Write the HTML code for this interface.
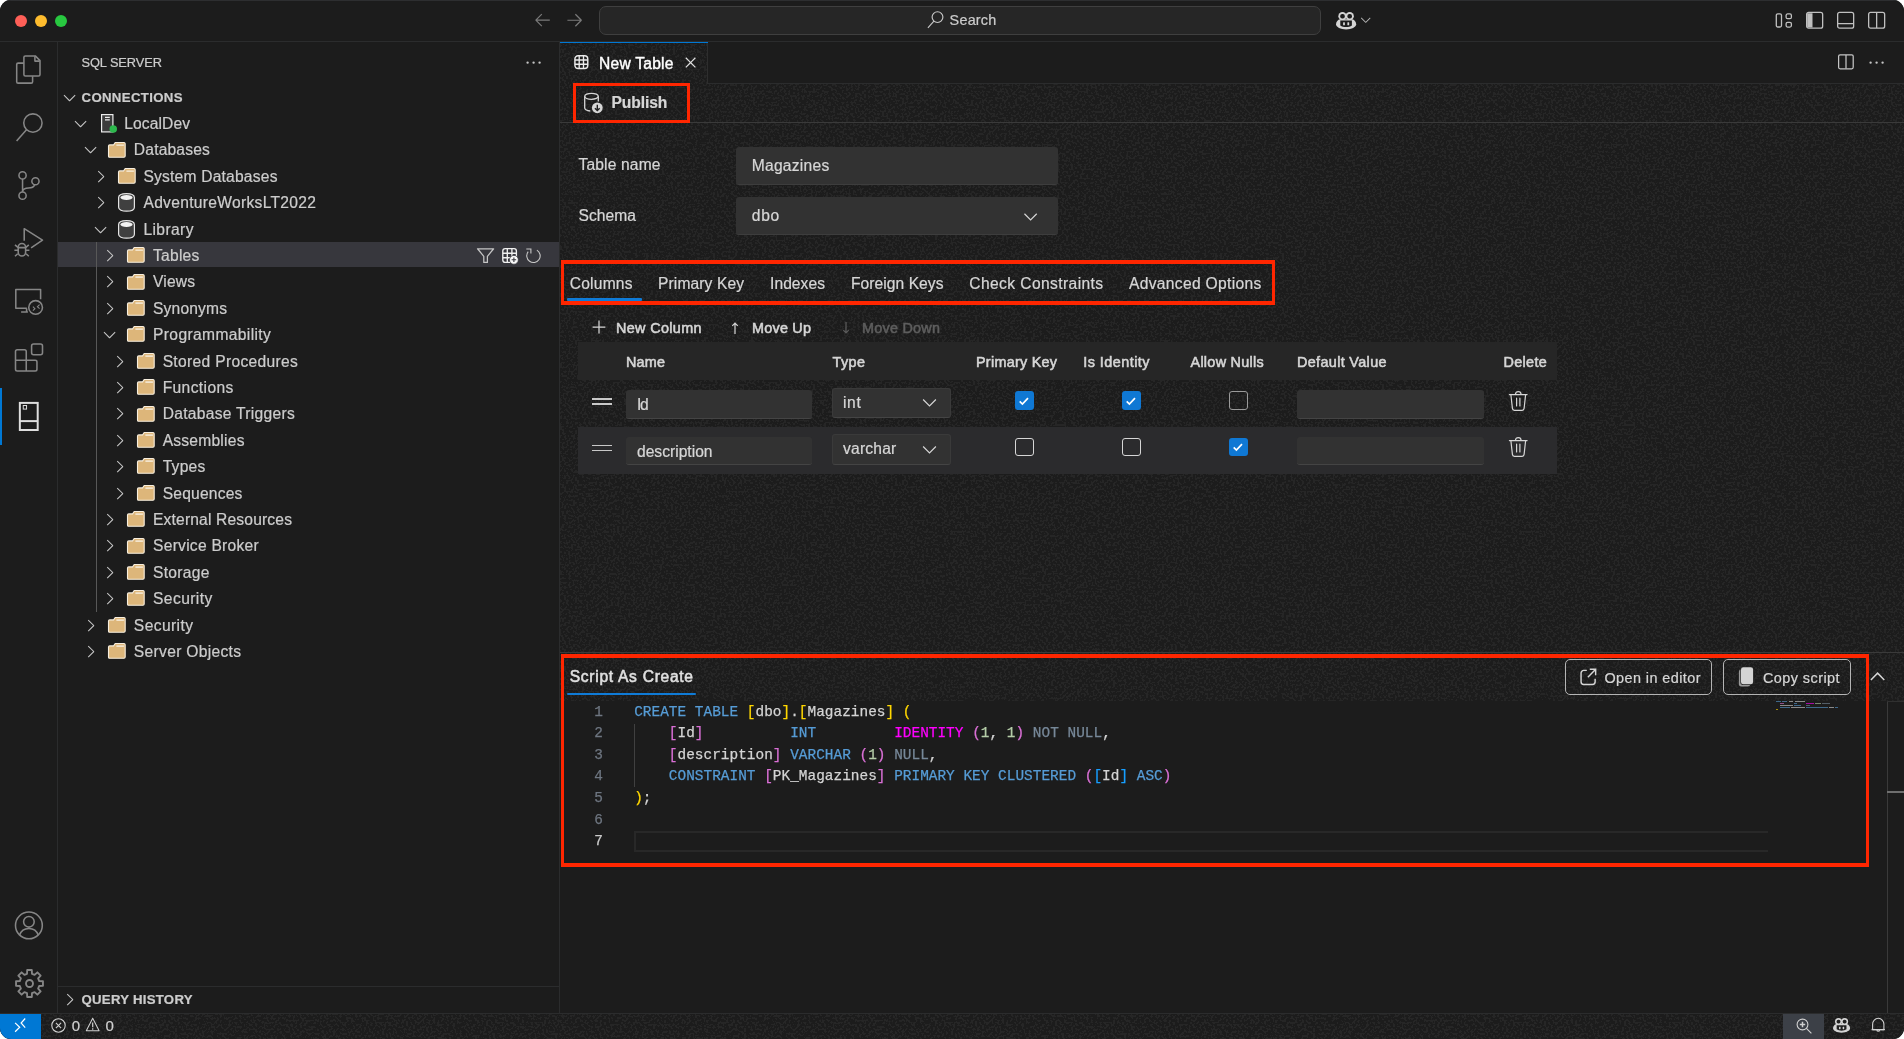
<!DOCTYPE html>
<html lang="en"><head><meta charset="utf-8"><title>New Table - SQL Server</title>
<style>
*{box-sizing:border-box}
html,body{margin:0;padding:0}
body{background:#fff;width:1904px;height:1039px;overflow:hidden;font-family:"Liberation Sans",sans-serif;color:#ccc}
#win{will-change:transform;position:absolute;left:0;top:0;width:1904px;height:1039px;border-radius:11px;background:#1c1c1c;overflow:hidden}
.a{position:absolute}
.t{position:absolute;white-space:pre;line-height:1;font-size:15.6px;color:#cccccc;-webkit-text-stroke:0.22px}
.m{position:absolute;white-space:pre;line-height:1;font-size:14.4px;font-family:"Liberation Mono",monospace;color:#d4d4d4;-webkit-text-stroke:0.25px}
svg{position:absolute;overflow:visible}
</style></head>
<body>
<div id="win">
<div class="a" style="left:0px;top:0px;width:1904px;height:41px;background:#1c1c1c;"></div>
<div class="a" style="left:0px;top:0px;width:1904px;height:1px;background:#2d2e30;"></div>
<div class="a" style="left:0px;top:41px;width:1904px;height:1px;background:#2b2c2d;"></div>
<div class="a" style="left:14.9px;top:14.799999999999999px;width:12.2px;height:12.2px;background:#fe5f57;border-radius:50%;"></div>
<div class="a" style="left:34.9px;top:14.799999999999999px;width:12.2px;height:12.2px;background:#febc2e;border-radius:50%;"></div>
<div class="a" style="left:54.9px;top:14.799999999999999px;width:12.2px;height:12.2px;background:#28c840;border-radius:50%;"></div>
<svg style="left:532.50px;top:10.40px" width="19.2" height="19.2" viewBox="0 0 16 16" ><path fill="#7a7a7a" d="M7 3.093l-5 5V8.8l5 5 .707-.707-4.146-4.147H14v-1H3.56L7.707 3.8 7 3.093z"/></svg>
<svg style="left:564.50px;top:10.40px" width="19.2" height="19.2" viewBox="0 0 16 16" ><path fill="#7a7a7a" d="M9 13.887l5-5V8.18l-5-5-.707.707 4.146 4.147H2v1h10.44L8.293 13.18l.707.707z"/></svg>
<div class="a" style="left:599px;top:5.7px;width:722px;height:29.3px;background:#262626;border:1px solid #3f3f3f;border-radius:7px;"></div>
<svg style="left:920.00px;top:5.00px" width="30" height="30" viewBox="0 0 30 30" ><circle cx="17.500" cy="12.100" r="5.400" fill="none" stroke="#c8c8c8" stroke-width="1.150"/><path d="M13.900 16.200L7.900 22.800" stroke="#c8c8c8" stroke-width="1.150" fill="none"/></svg>
<span class="t" style="left:949.60px;top:13.27px;font-size:14.4px;color:#cccccc;letter-spacing:0.218px;">Search</span>
<svg style="left:1336.00px;top:11.70px" width="20.2" height="17.4" viewBox="0 0 20.200 17.400" ><g fill="#d4d4d4"><circle cx="6.500" cy="4.150" r="4.150"/><circle cx="13.700" cy="4.150" r="4.150"/><path d="M0 12.200C0 9.500 2 7.600 4 7.200H16.200C18.200 7.600 20.200 9.500 20.200 12.200C20.200 15 15.500 17.400 10.100 17.400S0 15 0 12.200Z"/></g><g fill="#1c1c1c"><rect x="4.200" y="2" width="4.600" height="4.400" rx="2"/><rect x="11.400" y="2" width="4.600" height="4.400" rx="2"/><path d="M4.300 8.600H15.900V13.400C14.400 14.400 12.300 14.900 10.100 14.900S5.800 14.400 4.300 13.400Z"/></g><g fill="#d4d4d4"><rect x="7.100" y="10.200" width="1.800" height="3" rx=".5"/><rect x="11.400" y="10.200" width="1.800" height="3" rx=".5"/></g></svg>
<svg style="left:1357.90px;top:12.30px" width="15.5" height="15.5" viewBox="0 0 16 16" ><path fill="#b4b4b4" d="M7.976 10.072l4.357-4.357.62.618L8.284 11h-.618L3 6.333l.619-.618 4.357 4.357z"/></svg>
<svg style="left:1774.00px;top:10.20px" width="20" height="20" viewBox="0 0 20 20" ><rect x="2.300" y="3.800" width="5.200" height="13.200" rx="1.500" fill="none" stroke="#c0c0c0" stroke-width="1.3"/><rect x="12.100" y="3.900" width="5.300" height="4.800" rx="1.500" fill="none" stroke="#c0c0c0" stroke-width="1.3"/><rect x="12.100" y="12.300" width="5.300" height="4.800" rx="1.500" fill="none" stroke="#c0c0c0" stroke-width="1.3"/></svg>
<svg style="left:1804.00px;top:10.20px" width="20" height="20" viewBox="0 0 20 20" ><rect x="2.650" y="2.450" width="16" height="15.700" rx="2" fill="none" stroke="#c0c0c0" stroke-width="1.3"/><path d="M3.200 3.200h5.300v14.200H3.200z" fill="#c0c0c0"/></svg>
<svg style="left:1835.00px;top:10.20px" width="20" height="20" viewBox="0 0 20 20" ><rect x="2.650" y="2.450" width="16" height="15.700" rx="2" fill="none" stroke="#c0c0c0" stroke-width="1.3"/><path d="M3 13.600h15.400" fill="none" stroke="#c0c0c0" stroke-width="1.3"/></svg>
<svg style="left:1866.00px;top:10.20px" width="20" height="20" viewBox="0 0 20 20" ><rect x="2.650" y="2.450" width="16" height="15.700" rx="2" fill="none" stroke="#c0c0c0" stroke-width="1.3"/><path d="M10.650 2.600v15.400" fill="none" stroke="#c0c0c0" stroke-width="1.3"/></svg>
<div class="a" style="left:57px;top:42px;width:1px;height:971px;background:#2b2c2d;"></div>
<svg style="left:0.00px;top:0.00px" width="58" height="1039" viewBox="0 0 58 1039" ><path d="M25.4 55.9H35.3L40 60.6V74.600Q40 76 38.600 76H25.300Q23.900 76 23.900 74.600V57.300Q23.900 55.900 25.400 55.900Z" fill="none" stroke="#868686" stroke-width="1.55" stroke-linejoin="round"/><path d="M34.900 56.200V61.100H39.800" fill="none" stroke="#868686" stroke-width="1.55" stroke-linejoin="round"/><path d="M23.900 63.100H18.100Q16.700 63.100 16.700 64.500V81.700Q16.700 83.100 18.100 83.100H31.200Q32.600 83.100 32.600 81.700V76.200" fill="none" stroke="#868686" stroke-width="1.55" stroke-linejoin="round"/><circle cx="32.900" cy="123" r="9.150" fill="none" stroke="#868686" stroke-width="1.55" stroke-linejoin="round"/><path d="M26.700 129.600L16.600 140.900" fill="none" stroke="#868686" stroke-width="1.55" stroke-linejoin="round"/><circle cx="22.550" cy="175.450" r="3.600" fill="none" stroke="#868686" stroke-width="1.55" stroke-linejoin="round"/><circle cx="22.550" cy="195.650" r="3.600" fill="none" stroke="#868686" stroke-width="1.55" stroke-linejoin="round"/><circle cx="35.450" cy="181.250" r="3.600" fill="none" stroke="#868686" stroke-width="1.55" stroke-linejoin="round"/><path d="M22.550 179.100V192M34.600 184.900C33.600 187.700 31.500 187.900 28.500 187.900C25.500 187.900 23.200 188.800 22.600 191.300" fill="none" stroke="#868686" stroke-width="1.55" stroke-linejoin="round"/><path d="M24.200 240.800V228.700L42.500 240.100L31.100 247.800" fill="none" stroke="#868686" stroke-width="1.55" stroke-linejoin="round"/><rect x="18.200" y="243.500" width="7.400" height="12.500" rx="3.700" fill="none" stroke="#868686" stroke-width="1.55" stroke-linejoin="round"/><path d="M18.200 247.600H25.600M17.900 247.400L15 244.900M14.400 250.300H18M17.700 253.700L15 256.200M25.900 247.400L28.800 244.900M25.800 250.300H29.400M26.100 253.700L28.800 256.200" fill="none" stroke="#868686" stroke-width="1.55" stroke-linejoin="round"/><path d="M40.600 299.200V289.500H15.800V308.300H26.900" fill="none" stroke="#868686" stroke-width="1.55" stroke-linejoin="round"/><path d="M26.600 308.500V311.800M21.100 311.900H27.900" fill="none" stroke="#868686" stroke-width="1.55" stroke-linejoin="round"/><circle cx="35.600" cy="307.450" r="6.850" fill="none" stroke="#868686" stroke-width="1.55" stroke-linejoin="round"/><path d="M32.900 306.700L34.900 308.700L32.900 310.700M39.600 304.700L37.400 306.700L39.600 308.700" fill="none" stroke="#868686" stroke-width="1.1"/><path d="M17.300 349.700H24.500Q26.250 349.700 26.250 351.500V360.300H35.200Q36.950 360.300 36.950 362V369.300Q36.950 371.050 35.200 371.050H17.300Q15.500 371.050 15.500 369.300V351.500Q15.500 349.700 17.300 349.700ZM15.500 360.300H26.250M26.250 360.300V371.050" fill="none" stroke="#868686" stroke-width="1.55" stroke-linejoin="round"/><rect x="31.600" y="343.900" width="10.900" height="10.800" rx="2" fill="none" stroke="#868686" stroke-width="1.55" stroke-linejoin="round"/><circle cx="28.900" cy="925.400" r="13.400" fill="none" stroke="#868686" stroke-width="1.55" stroke-linejoin="round"/><circle cx="28.900" cy="921.800" r="5.300" fill="none" stroke="#868686" stroke-width="1.55" stroke-linejoin="round"/><path d="M19.600 935c1.500-4.600 5.100-6.600 9.300-6.600s7.800 2 9.300 6.600" fill="none" stroke="#868686" stroke-width="1.55" stroke-linejoin="round"/></svg>
<div class="a" style="left:0px;top:388px;width:2px;height:57px;background:#0078d4;"></div>
<svg style="left:0.00px;top:380.00px" width="58" height="70" viewBox="0 0 58 70" ><rect x="19.850" y="22.900" width="17.850" height="27.100" fill="none" stroke="#dedede" stroke-width="2"/><path d="M19.850 41.100h17.850" stroke="#dedede" stroke-width="2"/><rect x="23.250" y="25.500" width="3.300" height="3.600" fill="none" stroke="#dedede" stroke-width="1"/></svg>
<svg style="left:14.50px;top:969.00px" width="29" height="29" viewBox="0 0 24 24" ><path d="M10.09 0.86L13.91 0.86L14.05 3.96L16.23 4.86L18.52 2.77L21.23 5.48L19.14 7.77L20.04 9.95L23.14 10.09L23.14 13.91L20.04 14.05L19.14 16.23L21.23 18.52L18.52 21.23L16.23 19.14L14.05 20.04L13.91 23.14L10.09 23.14L9.95 20.04L7.77 19.14L5.48 21.23L2.77 18.52L4.86 16.23L3.96 14.05L0.86 13.91L0.86 10.09L3.96 9.95L4.86 7.77L2.77 5.48L5.48 2.77L7.77 4.86L9.95 3.96z" fill="none" stroke="#868686" stroke-width="1.55" stroke-linejoin="round"/><circle cx="12" cy="12" r="2.900" fill="none" stroke="#868686" stroke-width="1.55" stroke-linejoin="round"/></svg>
<div class="a" style="left:559px;top:42px;width:1px;height:971px;background:#2b2c2d;"></div>
<span class="t" style="left:81.50px;top:57.15px;font-size:12.8px;color:#cccccc;letter-spacing:-0.077px;">SQL SERVER</span>
<svg style="left:523.50px;top:53.00px" width="19.2" height="19.2" viewBox="0 0 16 16" ><path fill="#c5c5c5" d="M4 8a1 1 0 1 1-2 0 1 1 0 0 1 2 0zm5 0a1 1 0 1 1-2 0 1 1 0 0 1 2 0zm5 0a1 1 0 1 1-2 0 1 1 0 0 1 2 0z"/></svg>
<svg style="left:60.20px;top:88.00px" width="19.2" height="19.2" viewBox="0 0 16 16" ><path fill="#c5c5c5" d="M7.976 10.072l4.357-4.357.62.618L8.284 11h-.618L3 6.333l.619-.618 4.357 4.357z"/></svg>
<span class="t" style="left:81.50px;top:90.85px;font-size:13.2px;color:#cccccc;font-weight:700;letter-spacing:0.355px;">CONNECTIONS</span>
<div class="a" style="left:58px;top:241.9px;width:501px;height:25.6px;background:#37373d;"></div>
<div class="a" style="left:96px;top:242.4px;width:1px;height:369.59999999999997px;background:#585858;"></div>
<svg style="left:71.10px;top:114.00px" width="19.2" height="19.2" viewBox="0 0 16 16" ><path fill="#c5c5c5" d="M7.976 10.072l4.357-4.357.62.618L8.284 11h-.618L3 6.333l.619-.618 4.357 4.357z"/></svg>
<svg style="left:101.25px;top:114.30px" width="16" height="19" viewBox="0 0 16 19" ><rect x=".6" y=".6" width="11.300" height="17.300" fill="#3c3c3c" stroke="#ececec" stroke-width="1.200"/><path d="M4 3.400h4.800M4 5.900h4.800" stroke="#ececec" stroke-width="1.100"/><circle cx="12.250" cy="15.100" r="3.750" fill="#2db84d"/></svg>
<span class="t" style="left:124.25px;top:115.98px;letter-spacing:0.105px;">LocalDev</span>
<svg style="left:80.70px;top:140.40px" width="19.2" height="19.2" viewBox="0 0 16 16" ><path fill="#c5c5c5" d="M7.976 10.072l4.357-4.357.62.618L8.284 11h-.618L3 6.333l.619-.618 4.357 4.357z"/></svg>
<svg style="left:108.00px;top:141.60px" width="17.7" height="15.8" viewBox="0 0 17.700 15.800" ><path d="M1.700 2.900H5.600L7.200 .5H16Q17.200 .5 17.200 1.700V14.100Q17.200 15.300 16 15.300H1.700Q.5 15.300 .5 14.100V4.100Q.5 2.900 1.700 2.900Z" fill="#ddb67a" stroke="#f8efdf" stroke-width="1.100"/><path d="M8.400 3.100H15.900" stroke="#f8f0e2" stroke-width="1.400"/></svg>
<span class="t" style="left:133.85px;top:142.38px;letter-spacing:0.18px;">Databases</span>
<svg style="left:91.20px;top:166.80px" width="19.2" height="19.2" viewBox="0 0 16 16" ><path fill="#c5c5c5" d="M10.072 8.024L5.715 3.667l.618-.62L11 7.716v.618L6.333 13l-.618-.619 4.357-4.357z"/></svg>
<svg style="left:117.60px;top:168.00px" width="17.7" height="15.8" viewBox="0 0 17.700 15.800" ><path d="M1.700 2.900H5.600L7.200 .5H16Q17.200 .5 17.200 1.700V14.100Q17.200 15.300 16 15.300H1.700Q.5 15.300 .5 14.100V4.100Q.5 2.900 1.700 2.900Z" fill="#ddb67a" stroke="#f8efdf" stroke-width="1.100"/><path d="M8.400 3.100H15.900" stroke="#f8f0e2" stroke-width="1.400"/></svg>
<span class="t" style="left:143.45px;top:168.78px;letter-spacing:0.208px;">System Databases</span>
<svg style="left:91.20px;top:193.20px" width="19.2" height="19.2" viewBox="0 0 16 16" ><path fill="#c5c5c5" d="M10.072 8.024L5.715 3.667l.618-.62L11 7.716v.618L6.333 13l-.618-.619 4.357-4.357z"/></svg>
<svg style="left:118.10px;top:193.10px" width="17" height="18.8" viewBox="0 0 17 18.800" ><path d="M.6 4.600C.6 2 4 .6 8.500 .6S16.400 2 16.400 4.600V14.200C16.400 16.800 13 18.200 8.500 18.200S.6 16.800 .6 14.200Z" fill="#404040" stroke="#e4e4e4" stroke-width="1.200"/><ellipse cx="8.500" cy="4.500" rx="6" ry="2.600" fill="#f2f2f2"/></svg>
<span class="t" style="left:143.45px;top:195.18px;letter-spacing:0.304px;">AdventureWorksLT2022</span>
<svg style="left:90.50px;top:219.60px" width="19.2" height="19.2" viewBox="0 0 16 16" ><path fill="#c5c5c5" d="M7.976 10.072l4.357-4.357.62.618L8.284 11h-.618L3 6.333l.619-.618 4.357 4.357z"/></svg>
<svg style="left:118.10px;top:219.50px" width="17" height="18.8" viewBox="0 0 17 18.800" ><path d="M.6 4.600C.6 2 4 .6 8.500 .6S16.400 2 16.400 4.600V14.200C16.400 16.800 13 18.200 8.500 18.200S.6 16.800 .6 14.200Z" fill="#404040" stroke="#e4e4e4" stroke-width="1.200"/><ellipse cx="8.500" cy="4.500" rx="6" ry="2.600" fill="#f2f2f2"/></svg>
<span class="t" style="left:143.45px;top:221.58px;letter-spacing:0.388px;">Library</span>
<svg style="left:99.90px;top:246.00px" width="19.2" height="19.2" viewBox="0 0 16 16" ><path fill="#c5c5c5" d="M10.072 8.024L5.715 3.667l.618-.62L11 7.716v.618L6.333 13l-.618-.619 4.357-4.357z"/></svg>
<svg style="left:127.20px;top:247.20px" width="17.7" height="15.8" viewBox="0 0 17.700 15.800" ><path d="M1.700 2.900H5.600L7.200 .5H16Q17.200 .5 17.200 1.700V14.100Q17.200 15.300 16 15.300H1.700Q.5 15.300 .5 14.100V4.100Q.5 2.900 1.700 2.900Z" fill="#ddb67a" stroke="#f8efdf" stroke-width="1.100"/><path d="M8.400 3.100H15.900" stroke="#f8f0e2" stroke-width="1.400"/></svg>
<span class="t" style="left:153.05px;top:247.98px;letter-spacing:0.234px;">Tables</span>
<svg style="left:99.90px;top:272.40px" width="19.2" height="19.2" viewBox="0 0 16 16" ><path fill="#c5c5c5" d="M10.072 8.024L5.715 3.667l.618-.62L11 7.716v.618L6.333 13l-.618-.619 4.357-4.357z"/></svg>
<svg style="left:127.20px;top:273.60px" width="17.7" height="15.8" viewBox="0 0 17.700 15.800" ><path d="M1.700 2.900H5.600L7.200 .5H16Q17.200 .5 17.200 1.700V14.100Q17.200 15.300 16 15.300H1.700Q.5 15.300 .5 14.100V4.100Q.5 2.900 1.700 2.900Z" fill="#ddb67a" stroke="#f8efdf" stroke-width="1.100"/><path d="M8.400 3.100H15.900" stroke="#f8f0e2" stroke-width="1.400"/></svg>
<span class="t" style="left:153.05px;top:274.38px;letter-spacing:0.168px;">Views</span>
<svg style="left:99.90px;top:298.80px" width="19.2" height="19.2" viewBox="0 0 16 16" ><path fill="#c5c5c5" d="M10.072 8.024L5.715 3.667l.618-.62L11 7.716v.618L6.333 13l-.618-.619 4.357-4.357z"/></svg>
<svg style="left:127.20px;top:300.00px" width="17.7" height="15.8" viewBox="0 0 17.700 15.800" ><path d="M1.700 2.900H5.600L7.200 .5H16Q17.200 .5 17.200 1.700V14.100Q17.200 15.300 16 15.300H1.700Q.5 15.300 .5 14.100V4.100Q.5 2.900 1.700 2.900Z" fill="#ddb67a" stroke="#f8efdf" stroke-width="1.100"/><path d="M8.400 3.100H15.900" stroke="#f8f0e2" stroke-width="1.400"/></svg>
<span class="t" style="left:153.05px;top:300.78px;letter-spacing:0.17px;">Synonyms</span>
<svg style="left:99.90px;top:325.20px" width="19.2" height="19.2" viewBox="0 0 16 16" ><path fill="#c5c5c5" d="M7.976 10.072l4.357-4.357.62.618L8.284 11h-.618L3 6.333l.619-.618 4.357 4.357z"/></svg>
<svg style="left:127.20px;top:326.40px" width="17.7" height="15.8" viewBox="0 0 17.700 15.800" ><path d="M1.700 2.900H5.600L7.200 .5H16Q17.200 .5 17.200 1.700V14.100Q17.200 15.300 16 15.300H1.700Q.5 15.300 .5 14.100V4.100Q.5 2.900 1.700 2.900Z" fill="#ddb67a" stroke="#f8efdf" stroke-width="1.100"/><path d="M8.400 3.100H15.900" stroke="#f8f0e2" stroke-width="1.400"/></svg>
<span class="t" style="left:153.05px;top:327.18px;letter-spacing:0.367px;">Programmability</span>
<svg style="left:109.50px;top:351.60px" width="19.2" height="19.2" viewBox="0 0 16 16" ><path fill="#c5c5c5" d="M10.072 8.024L5.715 3.667l.618-.62L11 7.716v.618L6.333 13l-.618-.619 4.357-4.357z"/></svg>
<svg style="left:136.80px;top:352.80px" width="17.7" height="15.8" viewBox="0 0 17.700 15.800" ><path d="M1.700 2.900H5.600L7.200 .5H16Q17.200 .5 17.200 1.700V14.100Q17.200 15.300 16 15.300H1.700Q.5 15.300 .5 14.100V4.100Q.5 2.900 1.700 2.900Z" fill="#ddb67a" stroke="#f8efdf" stroke-width="1.100"/><path d="M8.400 3.100H15.900" stroke="#f8f0e2" stroke-width="1.400"/></svg>
<span class="t" style="left:162.65px;top:353.58px;letter-spacing:0.323px;">Stored Procedures</span>
<svg style="left:109.50px;top:378.00px" width="19.2" height="19.2" viewBox="0 0 16 16" ><path fill="#c5c5c5" d="M10.072 8.024L5.715 3.667l.618-.62L11 7.716v.618L6.333 13l-.618-.619 4.357-4.357z"/></svg>
<svg style="left:136.80px;top:379.20px" width="17.7" height="15.8" viewBox="0 0 17.700 15.800" ><path d="M1.700 2.900H5.600L7.200 .5H16Q17.200 .5 17.200 1.700V14.100Q17.200 15.300 16 15.300H1.700Q.5 15.300 .5 14.100V4.100Q.5 2.900 1.700 2.900Z" fill="#ddb67a" stroke="#f8efdf" stroke-width="1.100"/><path d="M8.400 3.100H15.900" stroke="#f8f0e2" stroke-width="1.400"/></svg>
<span class="t" style="left:162.65px;top:379.98px;letter-spacing:0.386px;">Functions</span>
<svg style="left:109.50px;top:404.40px" width="19.2" height="19.2" viewBox="0 0 16 16" ><path fill="#c5c5c5" d="M10.072 8.024L5.715 3.667l.618-.62L11 7.716v.618L6.333 13l-.618-.619 4.357-4.357z"/></svg>
<svg style="left:136.80px;top:405.60px" width="17.7" height="15.8" viewBox="0 0 17.700 15.800" ><path d="M1.700 2.900H5.600L7.200 .5H16Q17.200 .5 17.200 1.700V14.100Q17.200 15.300 16 15.300H1.700Q.5 15.300 .5 14.100V4.100Q.5 2.900 1.700 2.900Z" fill="#ddb67a" stroke="#f8efdf" stroke-width="1.100"/><path d="M8.400 3.100H15.900" stroke="#f8f0e2" stroke-width="1.400"/></svg>
<span class="t" style="left:162.65px;top:406.38px;letter-spacing:0.292px;">Database Triggers</span>
<svg style="left:109.50px;top:430.80px" width="19.2" height="19.2" viewBox="0 0 16 16" ><path fill="#c5c5c5" d="M10.072 8.024L5.715 3.667l.618-.62L11 7.716v.618L6.333 13l-.618-.619 4.357-4.357z"/></svg>
<svg style="left:136.80px;top:432.00px" width="17.7" height="15.8" viewBox="0 0 17.700 15.800" ><path d="M1.700 2.900H5.600L7.200 .5H16Q17.200 .5 17.200 1.700V14.100Q17.200 15.300 16 15.300H1.700Q.5 15.300 .5 14.100V4.100Q.5 2.900 1.700 2.900Z" fill="#ddb67a" stroke="#f8efdf" stroke-width="1.100"/><path d="M8.400 3.100H15.900" stroke="#f8f0e2" stroke-width="1.400"/></svg>
<span class="t" style="left:162.65px;top:432.78px;letter-spacing:0.23px;">Assemblies</span>
<svg style="left:109.50px;top:457.20px" width="19.2" height="19.2" viewBox="0 0 16 16" ><path fill="#c5c5c5" d="M10.072 8.024L5.715 3.667l.618-.62L11 7.716v.618L6.333 13l-.618-.619 4.357-4.357z"/></svg>
<svg style="left:136.80px;top:458.40px" width="17.7" height="15.8" viewBox="0 0 17.700 15.800" ><path d="M1.700 2.900H5.600L7.200 .5H16Q17.200 .5 17.200 1.700V14.100Q17.200 15.300 16 15.300H1.700Q.5 15.300 .5 14.100V4.100Q.5 2.900 1.700 2.900Z" fill="#ddb67a" stroke="#f8efdf" stroke-width="1.100"/><path d="M8.400 3.100H15.900" stroke="#f8f0e2" stroke-width="1.400"/></svg>
<span class="t" style="left:162.65px;top:459.18px;letter-spacing:0.273px;">Types</span>
<svg style="left:109.50px;top:483.60px" width="19.2" height="19.2" viewBox="0 0 16 16" ><path fill="#c5c5c5" d="M10.072 8.024L5.715 3.667l.618-.62L11 7.716v.618L6.333 13l-.618-.619 4.357-4.357z"/></svg>
<svg style="left:136.80px;top:484.80px" width="17.7" height="15.8" viewBox="0 0 17.700 15.800" ><path d="M1.700 2.900H5.600L7.200 .5H16Q17.200 .5 17.200 1.700V14.100Q17.200 15.300 16 15.300H1.700Q.5 15.300 .5 14.100V4.100Q.5 2.900 1.700 2.900Z" fill="#ddb67a" stroke="#f8efdf" stroke-width="1.100"/><path d="M8.400 3.100H15.900" stroke="#f8f0e2" stroke-width="1.400"/></svg>
<span class="t" style="left:162.65px;top:485.58px;letter-spacing:0.209px;">Sequences</span>
<svg style="left:99.90px;top:510.00px" width="19.2" height="19.2" viewBox="0 0 16 16" ><path fill="#c5c5c5" d="M10.072 8.024L5.715 3.667l.618-.62L11 7.716v.618L6.333 13l-.618-.619 4.357-4.357z"/></svg>
<svg style="left:127.20px;top:511.20px" width="17.7" height="15.8" viewBox="0 0 17.700 15.800" ><path d="M1.700 2.900H5.600L7.200 .5H16Q17.200 .5 17.200 1.700V14.100Q17.200 15.300 16 15.300H1.700Q.5 15.300 .5 14.100V4.100Q.5 2.900 1.700 2.900Z" fill="#ddb67a" stroke="#f8efdf" stroke-width="1.100"/><path d="M8.400 3.100H15.900" stroke="#f8f0e2" stroke-width="1.400"/></svg>
<span class="t" style="left:153.05px;top:511.98px;letter-spacing:0.166px;">External Resources</span>
<svg style="left:99.90px;top:536.40px" width="19.2" height="19.2" viewBox="0 0 16 16" ><path fill="#c5c5c5" d="M10.072 8.024L5.715 3.667l.618-.62L11 7.716v.618L6.333 13l-.618-.619 4.357-4.357z"/></svg>
<svg style="left:127.20px;top:537.60px" width="17.7" height="15.8" viewBox="0 0 17.700 15.800" ><path d="M1.700 2.900H5.600L7.200 .5H16Q17.200 .5 17.200 1.700V14.100Q17.200 15.300 16 15.300H1.700Q.5 15.300 .5 14.100V4.100Q.5 2.900 1.700 2.900Z" fill="#ddb67a" stroke="#f8efdf" stroke-width="1.100"/><path d="M8.400 3.100H15.900" stroke="#f8f0e2" stroke-width="1.400"/></svg>
<span class="t" style="left:153.05px;top:538.38px;letter-spacing:0.256px;">Service Broker</span>
<svg style="left:99.90px;top:562.80px" width="19.2" height="19.2" viewBox="0 0 16 16" ><path fill="#c5c5c5" d="M10.072 8.024L5.715 3.667l.618-.62L11 7.716v.618L6.333 13l-.618-.619 4.357-4.357z"/></svg>
<svg style="left:127.20px;top:564.00px" width="17.7" height="15.8" viewBox="0 0 17.700 15.800" ><path d="M1.700 2.900H5.600L7.200 .5H16Q17.200 .5 17.200 1.700V14.100Q17.200 15.300 16 15.300H1.700Q.5 15.300 .5 14.100V4.100Q.5 2.900 1.700 2.900Z" fill="#ddb67a" stroke="#f8efdf" stroke-width="1.100"/><path d="M8.400 3.100H15.900" stroke="#f8f0e2" stroke-width="1.400"/></svg>
<span class="t" style="left:153.05px;top:564.78px;letter-spacing:0.296px;">Storage</span>
<svg style="left:99.90px;top:589.20px" width="19.2" height="19.2" viewBox="0 0 16 16" ><path fill="#c5c5c5" d="M10.072 8.024L5.715 3.667l.618-.62L11 7.716v.618L6.333 13l-.618-.619 4.357-4.357z"/></svg>
<svg style="left:127.20px;top:590.40px" width="17.7" height="15.8" viewBox="0 0 17.700 15.800" ><path d="M1.700 2.900H5.600L7.200 .5H16Q17.200 .5 17.200 1.700V14.100Q17.200 15.300 16 15.300H1.700Q.5 15.300 .5 14.100V4.100Q.5 2.900 1.700 2.900Z" fill="#ddb67a" stroke="#f8efdf" stroke-width="1.100"/><path d="M8.400 3.100H15.900" stroke="#f8f0e2" stroke-width="1.400"/></svg>
<span class="t" style="left:153.05px;top:591.18px;letter-spacing:0.408px;">Security</span>
<svg style="left:80.70px;top:615.60px" width="19.2" height="19.2" viewBox="0 0 16 16" ><path fill="#c5c5c5" d="M10.072 8.024L5.715 3.667l.618-.62L11 7.716v.618L6.333 13l-.618-.619 4.357-4.357z"/></svg>
<svg style="left:108.00px;top:616.80px" width="17.7" height="15.8" viewBox="0 0 17.700 15.800" ><path d="M1.700 2.900H5.600L7.200 .5H16Q17.200 .5 17.200 1.700V14.100Q17.200 15.300 16 15.300H1.700Q.5 15.300 .5 14.100V4.100Q.5 2.900 1.700 2.900Z" fill="#ddb67a" stroke="#f8efdf" stroke-width="1.100"/><path d="M8.400 3.100H15.900" stroke="#f8f0e2" stroke-width="1.400"/></svg>
<span class="t" style="left:133.85px;top:617.58px;letter-spacing:0.408px;">Security</span>
<svg style="left:80.70px;top:642.00px" width="19.2" height="19.2" viewBox="0 0 16 16" ><path fill="#c5c5c5" d="M10.072 8.024L5.715 3.667l.618-.62L11 7.716v.618L6.333 13l-.618-.619 4.357-4.357z"/></svg>
<svg style="left:108.00px;top:643.20px" width="17.7" height="15.8" viewBox="0 0 17.700 15.800" ><path d="M1.700 2.900H5.600L7.200 .5H16Q17.200 .5 17.200 1.700V14.100Q17.200 15.300 16 15.300H1.700Q.5 15.300 .5 14.100V4.100Q.5 2.900 1.700 2.900Z" fill="#ddb67a" stroke="#f8efdf" stroke-width="1.100"/><path d="M8.400 3.100H15.900" stroke="#f8f0e2" stroke-width="1.400"/></svg>
<span class="t" style="left:133.85px;top:643.98px;letter-spacing:0.312px;">Server Objects</span>
<svg style="left:475.50px;top:246.00px" width="19.2" height="19.2" viewBox="0 0 16 16" ><path d="M1.300 2.300h13.400L9.500 8.600v5.100l-3 .0V8.600z" fill="none" stroke="#c5c5c5" stroke-width="1.050" stroke-linejoin="round"/></svg>
<svg style="left:465.00px;top:240.00px" width="90" height="30" viewBox="0 0 90 30" ><rect x="37.800" y="8.600" width="13.600" height="13.700" rx="2.400" fill="none" stroke="#f0f0f0" stroke-width="1.350"/><path d="M37.800 13.200h13.600M37.800 17.700h13.600M42.300 8.600v13.700M46.900 8.600v13.700" stroke="#f0f0f0" stroke-width="1.350"/><circle cx="48.900" cy="19.800" r="4.400" fill="#fafafa" stroke="#37373d" stroke-width=".7"/><path d="M48.900 17.500v4.600M46.600 19.800h4.600" stroke="#37373d" stroke-width="1.100"/><path d="M71.900 10.100A6.700 6.700 0 1 1 63.200 11.700" fill="none" stroke="#c8c8c8" stroke-width="1.100"/><path d="M61.300 9H65.900V13.400" fill="none" stroke="#c8c8c8" stroke-width="1.100"/></svg>
<div class="a" style="left:58px;top:986px;width:501px;height:1px;background:#2b2c2d;"></div>
<svg style="left:59.90px;top:990.30px" width="19.2" height="19.2" viewBox="0 0 16 16" ><path fill="#c5c5c5" d="M10.072 8.024L5.715 3.667l.618-.62L11 7.716v.618L6.333 13l-.618-.619 4.357-4.357z"/></svg>
<span class="t" style="left:81.50px;top:993.45px;font-size:13.2px;color:#cccccc;font-weight:700;letter-spacing:0.272px;">QUERY HISTORY</span>
<div class="a" style="left:560px;top:42px;width:1344px;height:42px;background:#1c1c1c;"></div>
<div class="a" style="left:560px;top:83px;width:1344px;height:1px;background:#2b2c2d;"></div>
<div class="a" style="left:560px;top:42px;width:148px;height:42px;background:#1c1c1c;border-right:1px solid #2e2e2e;"></div>
<svg style="left:0;top:0" width="1904" height="1039" viewBox="0 0 1904 1039"><rect x="560" y="43" width="147" height="41" filter="url(#n)"/></svg>
<div class="a" style="left:560px;top:42px;width:148px;height:1.3px;background:#0078d4;"></div>
<svg style="left:574.20px;top:55.30px" width="14.7" height="14.3" viewBox="0 0 16 16" ><rect x=".8" y=".8" width="14.400" height="14.400" rx="3.600" fill="none" stroke="#ececec" stroke-width="1.600"/><path d="M.8 5.600h14.400M.8 10.400h14.400M5.600.8v14.400M10.400.8v14.400" stroke="#ececec" stroke-width="1.500"/></svg>
<span class="t" style="left:599.00px;top:55.68px;color:#ffffff;letter-spacing:0.246px;-webkit-text-stroke:0.4px;">New Table</span>
<svg style="left:681.40px;top:53.10px" width="19.2" height="19.2" viewBox="0 0 16 16" ><path fill="#e0e0e0" d="M8 8.707l3.646 3.647.708-.707L8.707 8l3.647-3.646-.707-.708L8 7.293 4.354 3.646l-.707.708L7.293 8l-3.646 3.646.707.708L8 8.707z"/></svg>
<svg style="left:1837.00px;top:53.00px" width="18" height="18" viewBox="0 0 18 18" ><rect x="1.600" y="1.800" width="14.600" height="14" rx="1.500" fill="none" stroke="#c5c5c5" stroke-width="1.250"/><path d="M9 2v13.600" stroke="#c5c5c5" stroke-width="1.250"/></svg>
<svg style="left:1867.40px;top:53.00px" width="19.2" height="19.2" viewBox="0 0 16 16" ><path fill="#c5c5c5" d="M4 8a1 1 0 1 1-2 0 1 1 0 0 1 2 0zm5 0a1 1 0 1 1-2 0 1 1 0 0 1 2 0zm5 0a1 1 0 1 1-2 0 1 1 0 0 1 2 0z"/></svg>
<div class="a" style="left:560px;top:84px;width:1344px;height:569px;background:#1c1c1c;"></div>
<svg style="left:0;top:0" width="1904" height="1039" viewBox="0 0 1904 1039"><filter id="n" x="0" y="0" width="100%" height="100%" color-interpolation-filters="sRGB"><feTurbulence type="fractalNoise" baseFrequency="0.45" numOctaves="1" seed="7"/><feColorMatrix type="matrix" values="0 0 0 0 0.149  0 0 0 0 0.149  0 0 0 0 0.149  40 0 0 0 -21.2"/></filter><rect x="560" y="84" width="1344" height="616.500" filter="url(#n)"/></svg>
<div class="a" style="left:560px;top:122px;width:1344px;height:1px;background:#3a3a3a;"></div>
<svg style="left:583.10px;top:91.80px" width="21" height="22" viewBox="0 0 21 22" ><path d="M1.700 4.300v11.500c0 1.700 2.400 2.900 5.600 3.200" fill="none" stroke="#d6d6d6" stroke-width="1.300"/><path d="M15.300 4.300v5.200" fill="none" stroke="#d6d6d6" stroke-width="1.300"/><ellipse cx="8.500" cy="4.300" rx="6.800" ry="3" fill="none" stroke="#d6d6d6" stroke-width="1.300"/><circle cx="14.300" cy="15.800" r="5.400" fill="#d6d6d6"/><path d="M14.300 12.800v5.700M11.900 16.200l2.400 2.400 2.400-2.400" fill="none" stroke="#202020" stroke-width="1.400"/></svg>
<span class="t" style="left:611.50px;top:94.68px;color:#d6d6d6;font-weight:700;letter-spacing:-0.096px;">Publish</span>
<div class="a" style="left:573.1px;top:82.6px;width:116.6px;height:40.2px;border:3.700px solid #ff2600;"></div>
<span class="t" style="left:578.50px;top:156.88px;color:#d6d6d6;letter-spacing:0.153px;">Table name</span>
<div class="a" style="left:736px;top:147.2px;width:322px;height:38px;background:#323232;border-radius:3px;border-bottom:1px solid #3d3d3d;"></div>
<span class="t" style="left:751.75px;top:157.98px;color:#d6d6d6;letter-spacing:0.26px;">Magazines</span>
<span class="t" style="left:578.50px;top:208.38px;color:#d6d6d6;letter-spacing:0.056px;">Schema</span>
<div class="a" style="left:736px;top:197.2px;width:322px;height:38px;background:#323232;border-radius:3px;border-bottom:1px solid #3d3d3d;"></div>
<span class="t" style="left:751.75px;top:207.68px;color:#d6d6d6;letter-spacing:0.734px;">dbo</span>
<svg style="left:1021.00px;top:207.30px" width="19.2" height="19.2" viewBox="0 0 20 20" ><path d="M3.600 7l6.400 6.400L16.400 7" fill="none" stroke="#d6d6d6" stroke-width="1.250"/></svg>
<span class="t" style="left:569.75px;top:275.78px;color:#d6d6d6;letter-spacing:0.203px;">Columns</span>
<span class="t" style="left:658.00px;top:275.78px;color:#d6d6d6;letter-spacing:0.108px;">Primary Key</span>
<span class="t" style="left:770.00px;top:275.78px;color:#d6d6d6;letter-spacing:0.062px;">Indexes</span>
<span class="t" style="left:851.00px;top:275.78px;color:#d6d6d6;letter-spacing:0.057px;">Foreign Keys</span>
<span class="t" style="left:969.25px;top:275.78px;color:#d6d6d6;letter-spacing:0.406px;">Check Constraints</span>
<span class="t" style="left:1128.90px;top:275.78px;color:#d6d6d6;letter-spacing:0.338px;">Advanced Options</span>
<div class="a" style="left:567.3px;top:298.4px;width:74.4px;height:2.6px;background:#0f7bd7;border-radius:1px;"></div>
<div class="a" style="left:560.7px;top:260.1px;width:714.2px;height:45px;border-style:solid;border-color:#ff2600;border-width:4.100px 3.900px;"></div>
<svg style="left:592.20px;top:320.30px" width="14" height="14" viewBox="0 0 14 14" ><path d="M7 .6v12.800M.6 7h12.800" stroke="#d6d6d6" stroke-width="1.250"/></svg>
<span class="t" style="left:616.00px;top:320.77px;font-size:14.4px;color:#d6d6d6;-webkit-text-stroke:0.55px;letter-spacing:0.347px;">New Column</span>
<svg style="left:729.00px;top:320.50px" width="12" height="14" viewBox="0 0 12 14" ><path d="M6 2v11M3.300 4.800L6 2l2.700 2.800" fill="none" stroke="#d6d6d6" stroke-width="1.200"/></svg>
<span class="t" style="left:752.00px;top:320.77px;font-size:14.4px;color:#d6d6d6;-webkit-text-stroke:0.55px;letter-spacing:0.234px;">Move Up</span>
<svg style="left:839.50px;top:320.50px" width="12" height="14" viewBox="0 0 12 14" ><path d="M6 1v11M3.300 9.200L6 12l2.700-2.800" fill="none" stroke="#5c5c5c" stroke-width="1.200"/></svg>
<span class="t" style="left:862.00px;top:320.77px;font-size:14.4px;color:#5e5e5e;-webkit-text-stroke:0.55px;letter-spacing:0.252px;">Move Down</span>
<div class="a" style="left:578px;top:342px;width:979px;height:37.6px;background:#262626;"></div>
<div class="a" style="left:578px;top:427px;width:979px;height:46.5px;background:#2b2b2d;"></div>
<span class="t" style="left:626.00px;top:354.77px;font-size:14.4px;color:#d6d6d6;-webkit-text-stroke:0.55px;letter-spacing:0.203px;">Name</span>
<span class="t" style="left:832.50px;top:354.77px;font-size:14.4px;color:#d6d6d6;-webkit-text-stroke:0.55px;letter-spacing:0.432px;">Type</span>
<span class="t" style="left:976.00px;top:354.77px;font-size:14.4px;color:#d6d6d6;-webkit-text-stroke:0.55px;letter-spacing:0.263px;">Primary Key</span>
<span class="t" style="left:1083.25px;top:354.77px;font-size:14.4px;color:#d6d6d6;-webkit-text-stroke:0.55px;letter-spacing:0.466px;">Is Identity</span>
<span class="t" style="left:1190.50px;top:354.77px;font-size:14.4px;color:#d6d6d6;-webkit-text-stroke:0.55px;letter-spacing:0.287px;">Allow Nulls</span>
<span class="t" style="left:1297.00px;top:354.77px;font-size:14.4px;color:#d6d6d6;-webkit-text-stroke:0.55px;letter-spacing:0.346px;">Default Value</span>
<span class="t" style="left:1503.50px;top:354.77px;font-size:14.4px;color:#d6d6d6;-webkit-text-stroke:0.55px;letter-spacing:0.328px;">Delete</span>
<div class="a" style="left:592px;top:398px;width:20px;height:1.6px;background:#c8c8c8;"></div>
<div class="a" style="left:592px;top:403px;width:20px;height:1.6px;background:#c8c8c8;"></div>
<div class="a" style="left:626.2px;top:390px;width:186.3px;height:28.5px;background:#323232;border-radius:3px;border-bottom:1px solid #444;"></div>
<span class="t" style="left:637.00px;top:397.28px;color:#d6d6d6;letter-spacing:-1.266px;">Id</span>
<div class="a" style="left:832px;top:387.7px;width:119.3px;height:30.8px;background:#323232;border-radius:3px;border:1px solid #3a3a3a;border-bottom-color:#444;"></div>
<span class="t" style="left:843.00px;top:394.68px;color:#d6d6d6;letter-spacing:0.633px;">int</span>
<svg style="left:921.00px;top:394.30px" width="17" height="17" viewBox="0 0 20 20" ><path d="M2.500 6.500l7.500 7.500 7.500-7.500" fill="none" stroke="#d6d6d6" stroke-width="1.400"/></svg>
<div class="a" style="left:1014.7px;top:391.2px;width:19px;height:18.6px;background:#0f78d4;border-radius:3px;"></div>
<svg style="left:1016.20px;top:392.50px" width="16" height="16" viewBox="0 0 16 16" ><path d="M3.700 8.300l2.700 2.700 5.600-5.800" fill="none" stroke="#fff" stroke-width="1.700"/></svg>
<div class="a" style="left:1121.8px;top:391.2px;width:19px;height:18.6px;background:#0f78d4;border-radius:3px;"></div>
<svg style="left:1123.30px;top:392.50px" width="16" height="16" viewBox="0 0 16 16" ><path d="M3.700 8.300l2.700 2.700 5.600-5.800" fill="none" stroke="#fff" stroke-width="1.700"/></svg>
<div class="a" style="left:1228.7px;top:391.2px;width:19px;height:18.6px;border:1.200px solid #9a9a9a;border-radius:3px;"></div>
<div class="a" style="left:1297px;top:390px;width:186.8px;height:28.5px;background:#323232;border-radius:3px;border-bottom:1px solid #444;"></div>
<svg style="left:1508.90px;top:390.90px" width="18.5" height="20" viewBox="0 0 18.500 20" ><path d="M.4 3.600H18.100M6.400 3.400C6.400 -.4 12.100 -.4 12.100 3.400M1.900 3.800L3.400 17.400C3.500 18.600 4.300 19.300 5.400 19.300H13.100C14.200 19.300 15 18.600 15.100 17.400L16.600 3.800M7.600 7.200V15M10.900 7.200V15" fill="none" stroke="#d6d6d6" stroke-width="1.200" stroke-linecap="round"/></svg>
<div class="a" style="left:592px;top:444.5px;width:20px;height:1.6px;background:#c8c8c8;"></div>
<div class="a" style="left:592px;top:449.5px;width:20px;height:1.6px;background:#c8c8c8;"></div>
<div class="a" style="left:626.2px;top:436.5px;width:186.3px;height:28.5px;background:#323232;border-radius:3px;border-bottom:1px solid #444;"></div>
<span class="t" style="left:637.00px;top:443.78px;color:#d6d6d6;letter-spacing:0.008px;">description</span>
<div class="a" style="left:832px;top:434.2px;width:119.3px;height:30.8px;background:#323232;border-radius:3px;border:1px solid #3a3a3a;border-bottom-color:#444;"></div>
<span class="t" style="left:843.00px;top:441.18px;color:#d6d6d6;letter-spacing:0.208px;">varchar</span>
<svg style="left:921.00px;top:440.80px" width="17" height="17" viewBox="0 0 20 20" ><path d="M2.500 6.500l7.500 7.500 7.500-7.500" fill="none" stroke="#d6d6d6" stroke-width="1.400"/></svg>
<div class="a" style="left:1014.7px;top:437.7px;width:19px;height:18.6px;border:1.200px solid #d6d6d6;border-radius:3px;"></div>
<div class="a" style="left:1121.8px;top:437.7px;width:19px;height:18.6px;border:1.200px solid #d6d6d6;border-radius:3px;"></div>
<div class="a" style="left:1228.7px;top:437.7px;width:19px;height:18.6px;background:#0f78d4;border-radius:3px;"></div>
<svg style="left:1230.20px;top:439.00px" width="16" height="16" viewBox="0 0 16 16" ><path d="M3.700 8.300l2.700 2.700 5.600-5.800" fill="none" stroke="#fff" stroke-width="1.700"/></svg>
<div class="a" style="left:1297px;top:436.5px;width:186.8px;height:28.5px;background:#323232;border-radius:3px;border-bottom:1px solid #444;"></div>
<svg style="left:1508.90px;top:437.40px" width="18.5" height="20" viewBox="0 0 18.500 20" ><path d="M.4 3.600H18.100M6.400 3.400C6.400 -.4 12.100 -.4 12.100 3.400M1.900 3.800L3.400 17.400C3.500 18.600 4.300 19.300 5.400 19.300H13.100C14.200 19.300 15 18.600 15.100 17.400L16.600 3.800M7.600 7.200V15M10.900 7.200V15" fill="none" stroke="#d6d6d6" stroke-width="1.200" stroke-linecap="round"/></svg>
<div class="a" style="left:560px;top:652px;width:1344px;height:1px;background:#3a3a3a;"></div>
<div class="a" style="left:560px;top:700.5px;width:1344px;height:313px;background:#1c1c1c;"></div>
<span class="t" style="left:569.75px;top:668.98px;color:#e0e0e0;-webkit-text-stroke:0.55px;letter-spacing:0.705px;">Script As Create</span>
<div class="a" style="left:567.3px;top:692.8px;width:128.3px;height:2.5px;background:#0f7bd7;border-radius:1px;"></div>
<div class="a" style="left:1565px;top:659px;width:146.5px;height:36px;border:1px solid #b4b4b4;border-radius:5px;"></div>

<span class="t" style="left:1604.50px;top:670.87px;font-size:14.4px;color:#d6d6d6;letter-spacing:0.43px;">Open in editor</span>
<svg style="left:1578.50px;top:668.00px" width="18.5" height="18.5" viewBox="0 0 18 18" ><path d="M7.600 2.300H4.600a2.600 2.600 0 0 0-2.600 2.600v8.500a2.600 2.600 0 0 0 2.600 2.600h8.500a2.600 2.600 0 0 0 2.600-2.600v-3" fill="none" stroke="#d6d6d6" stroke-width="1.400"/><path d="M10.500 1.300h5.700v5.700M16 1.500L8.600 8.900" fill="none" stroke="#d6d6d6" stroke-width="1.400"/></svg>
<div class="a" style="left:1722.5px;top:659px;width:128.3px;height:36px;border:1px solid #b4b4b4;border-radius:5px;"></div>

<span class="t" style="left:1763.00px;top:670.87px;font-size:14.4px;color:#d6d6d6;letter-spacing:0.452px;">Copy script</span>
<svg style="left:1738.00px;top:666.00px" width="17" height="22" viewBox="0 0 17 22" ><rect x=".9" y="3.300" width="11.300" height="17.300" rx="2.400" fill="#9a9a9a"/><rect x="2.400" y=".8" width="13.300" height="18.100" rx="2.600" fill="#202020"/><rect x="3" y="1.300" width="12.100" height="17" rx="2.300" fill="#d4d4d4"/></svg>
<svg style="left:1868.40px;top:667.00px" width="19.2" height="19.2" viewBox="0 0 20 20" ><path d="M3 13.600L10 6.400l7 7.200" fill="none" stroke="#d6d6d6" stroke-width="1.500"/></svg>
<span class="m" style="left:555px;top:704.57px;width:48px;text-align:right;color:#6e7681">1</span>
<span class="m" style="left:634.2px;top:704.57px;letter-spacing:0.028px"><span style="color:#569cd6">CREATE TABLE </span><span style="color:#ffd700">[</span><span style="color:#d4d4d4">dbo</span><span style="color:#ffd700">]</span><span style="color:#d4d4d4">.</span><span style="color:#ffd700">[</span><span style="color:#d4d4d4">Magazines</span><span style="color:#ffd700">]</span><span style="color:#d4d4d4"> </span><span style="color:#ffd700">(</span></span>
<span class="m" style="left:555px;top:726.17px;width:48px;text-align:right;color:#6e7681">2</span>
<span class="m" style="left:634.2px;top:726.17px;letter-spacing:0.028px"><span style="color:#d4d4d4">    </span><span style="color:#da70d6">[</span><span style="color:#d4d4d4">Id</span><span style="color:#da70d6">]</span><span style="color:#d4d4d4">          </span><span style="color:#569cd6">INT</span><span style="color:#d4d4d4">         </span><span style="color:#ff00ff">IDENTITY</span><span style="color:#d4d4d4"> </span><span style="color:#da70d6">(</span><span style="color:#b5cea8">1</span><span style="color:#d4d4d4">, </span><span style="color:#b5cea8">1</span><span style="color:#da70d6">)</span><span style="color:#d4d4d4"> </span><span style="color:#778899">NOT NULL</span><span style="color:#d4d4d4">,</span></span>
<span class="m" style="left:555px;top:747.77px;width:48px;text-align:right;color:#6e7681">3</span>
<span class="m" style="left:634.2px;top:747.77px;letter-spacing:0.028px"><span style="color:#d4d4d4">    </span><span style="color:#da70d6">[</span><span style="color:#d4d4d4">description</span><span style="color:#da70d6">]</span><span style="color:#d4d4d4"> </span><span style="color:#569cd6">VARCHAR</span><span style="color:#d4d4d4"> </span><span style="color:#da70d6">(</span><span style="color:#b5cea8">1</span><span style="color:#da70d6">)</span><span style="color:#d4d4d4"> </span><span style="color:#778899">NULL</span><span style="color:#d4d4d4">,</span></span>
<span class="m" style="left:555px;top:769.37px;width:48px;text-align:right;color:#6e7681">4</span>
<span class="m" style="left:634.2px;top:769.37px;letter-spacing:0.028px"><span style="color:#d4d4d4">    </span><span style="color:#569cd6">CONSTRAINT </span><span style="color:#da70d6">[</span><span style="color:#d4d4d4">PK_Magazines</span><span style="color:#da70d6">]</span><span style="color:#d4d4d4"> </span><span style="color:#569cd6">PRIMARY KEY CLUSTERED </span><span style="color:#da70d6">(</span><span style="color:#179fff">[</span><span style="color:#d4d4d4">Id</span><span style="color:#179fff">]</span><span style="color:#d4d4d4"> </span><span style="color:#569cd6">ASC</span><span style="color:#da70d6">)</span></span>
<span class="m" style="left:555px;top:790.97px;width:48px;text-align:right;color:#6e7681">5</span>
<span class="m" style="left:634.2px;top:790.97px;letter-spacing:0.028px"><span style="color:#ffd700">)</span><span style="color:#d4d4d4">;</span></span>
<span class="m" style="left:555px;top:812.57px;width:48px;text-align:right;color:#6e7681">6</span>
<span class="m" style="left:555px;top:834.17px;width:48px;text-align:right;color:#cccccc">7</span>
<div class="a" style="left:634.3px;top:724px;width:1px;height:63.4px;background:#404040;"></div>
<div class="a" style="left:634px;top:830.8px;width:1134px;height:20.8px;border:2px solid #282828;border-right:none;"></div>
<svg style="left:1775.50px;top:701.00px" width="64" height="12" viewBox="0 0 64 12" ><rect x="0.0" y="0.0" width="5.0" height="1" fill="#569cd6" opacity=".6"/><rect x="6.0" y="0.0" width="5.0" height="1" fill="#569cd6" opacity=".6"/><rect x="13.0" y="0.0" width="4.0" height="1" fill="#d4d4d4" opacity=".6"/><rect x="19.0" y="0.0" width="10.0" height="1" fill="#d4d4d4" opacity=".6"/><rect x="4.0" y="2.0" width="4.0" height="1" fill="#da70d6" opacity=".6"/><rect x="18.0" y="2.0" width="3.0" height="1" fill="#569cd6" opacity=".6"/><rect x="30.0" y="2.0" width="8.0" height="1" fill="#ff00ff" opacity=".6"/><rect x="39.0" y="2.0" width="6.0" height="1" fill="#b5cea8" opacity=".6"/><rect x="46.0" y="2.0" width="8.0" height="1" fill="#778899" opacity=".6"/><rect x="4.0" y="4.0" width="13.0" height="1" fill="#d4d4d4" opacity=".6"/><rect x="18.0" y="4.0" width="7.0" height="1" fill="#569cd6" opacity=".6"/><rect x="30.0" y="4.0" width="4.0" height="1" fill="#778899" opacity=".6"/><rect x="4.0" y="6.0" width="10.0" height="1" fill="#569cd6" opacity=".6"/><rect x="15.0" y="6.0" width="14.0" height="1" fill="#d4d4d4" opacity=".6"/><rect x="30.0" y="6.0" width="22.0" height="1" fill="#569cd6" opacity=".6"/><rect x="53.0" y="6.0" width="5.0" height="1" fill="#d4d4d4" opacity=".6"/><rect x="59.0" y="6.0" width="3.0" height="1" fill="#569cd6" opacity=".6"/><rect x="0.0" y="8.0" width="2.0" height="1" fill="#ffd700" opacity=".6"/></svg>
<div class="a" style="left:1887px;top:701px;width:1px;height:313px;background:#3a3a3a;"></div>
<div class="a" style="left:1887px;top:701px;width:17px;height:1px;background:#303030;"></div>
<div class="a" style="left:1887px;top:791px;width:17px;height:2px;background:#6e6e6e;"></div>
<div class="a" style="left:560.7px;top:654.2px;width:1308.1px;height:213.0px;border-style:solid;border-color:#ff2600;border-width:4px 3.900px 4.300px 3.800px;"></div>
<div class="a" style="left:0px;top:1013px;width:1904px;height:26px;background:#1c1c1c;"></div>
<svg style="left:0;top:0" width="1904" height="1039" viewBox="0 0 1904 1039"><rect x="41" y="1014" width="1863" height="25" filter="url(#n)"/></svg>
<div class="a" style="left:0px;top:1013px;width:1904px;height:1px;background:#2b2c2d;"></div>
<div class="a" style="left:0px;top:1013.5px;width:41px;height:25.5px;background:#0078d4;"></div>
<svg style="left:0.00px;top:1009.00px" width="42" height="30" viewBox="0 0 42 30" ><path d="M15.100 13.900L19.700 18.300L15.100 22.700M25.200 9.500L21.100 14L25.200 18.600" fill="none" stroke="#fff" stroke-width="1.200"/></svg>
<svg style="left:51.40px;top:1018.00px" width="15" height="15" viewBox="0 0 15 15" ><circle cx="7.500" cy="7.500" r="6.700" fill="none" stroke="#d0d0d0" stroke-width="1.100"/><path d="M4.900 4.900l5.200 5.200M10.100 4.900l-5.200 5.200" stroke="#d0d0d0" stroke-width="1.100"/></svg>
<span class="t" style="left:71.80px;top:1018.27px;font-size:15px;color:#d0d0d0;">0</span>
<svg style="left:85.30px;top:1017.20px" width="15.4" height="14.8" viewBox="0 0 15.400 14.800" ><path d="M7.700 1.300L14.100 13.700H1.300z" fill="none" stroke="#d0d0d0" stroke-width="1.050" stroke-linejoin="round"/><path d="M7.700 5.600v4.600M7.700 11.300v1.400" stroke="#d0d0d0" stroke-width="1.200"/></svg>
<span class="t" style="left:105.60px;top:1018.27px;font-size:15px;color:#d0d0d0;">0</span>
<div class="a" style="left:1783px;top:1014px;width:41px;height:25px;background:#3c4047;"></div>
<svg style="left:1795.50px;top:1017.50px" width="16" height="16" viewBox="0 0 16 16" ><circle cx="6.500" cy="6.500" r="5.400" fill="none" stroke="#d0d0d0" stroke-width="1.100"/><path d="M10.400 10.400l5 5" stroke="#d0d0d0" stroke-width="1.200"/><path d="M6.500 3.800v5.400M3.800 6.500h5.400" stroke="#d0d0d0" stroke-width="1.500"/></svg>
<svg style="left:1833.25px;top:1018.00px" width="17.15" height="14.75" viewBox="0 0 20.200 17.400" ><g fill="#d4d4d4"><circle cx="6.500" cy="4.150" r="4.150"/><circle cx="13.700" cy="4.150" r="4.150"/><path d="M0 12.200C0 9.500 2 7.600 4 7.200H16.200C18.200 7.600 20.200 9.500 20.200 12.200C20.200 15 15.500 17.400 10.100 17.400S0 15 0 12.200Z"/></g><g fill="#202020"><rect x="4.200" y="2" width="4.600" height="4.400" rx="2"/><rect x="11.400" y="2" width="4.600" height="4.400" rx="2"/><path d="M4.300 8.600H15.900V13.400C14.400 14.400 12.300 14.900 10.100 14.900S5.800 14.400 4.300 13.400Z"/></g><g fill="#d4d4d4"><rect x="7.100" y="10.200" width="1.800" height="3" rx=".5"/><rect x="11.400" y="10.200" width="1.800" height="3" rx=".5"/></g></svg>
<svg style="left:1870.50px;top:1017.30px" width="14.5" height="16" viewBox="0 0 14.500 16" ><path d="M1.600 12.600V7.300c0-3.400 2.500-6 5.650-6s5.650 2.600 5.650 6v5.300z" fill="none" stroke="#d0d0d0" stroke-width="1.100" stroke-linejoin="round"/><path d="M.6 12.600h13.300M5.900 13.200c.2 1.400 2.500 1.400 2.700 0" fill="none" stroke="#d0d0d0" stroke-width="1.100"/></svg>
</div>
</body></html>
